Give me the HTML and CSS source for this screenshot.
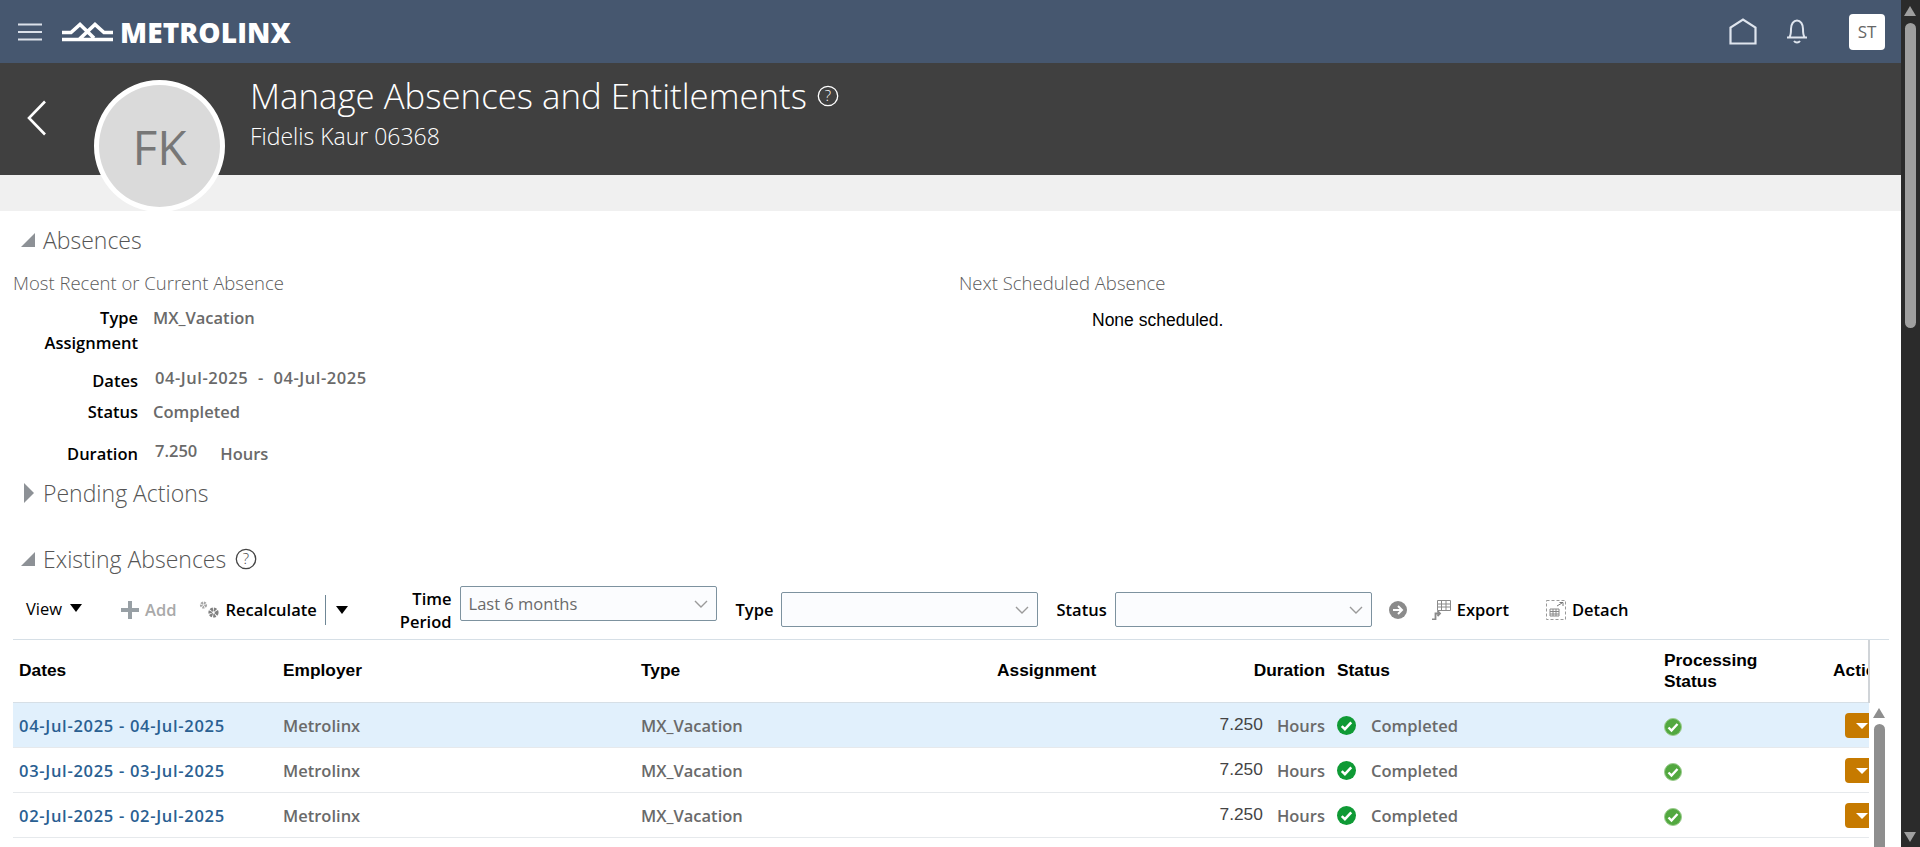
FILE: index.html
```html
<!DOCTYPE html>
<html lang="en">
<head>
  <meta charset="UTF-8" />
  <title>Manage Absences and Entitlements</title>
  <link rel="stylesheet" href="styles.css">
</head>
<body>
  <div class="page">
    <!-- Top bar -->
    <header class="topbar">
      <svg class="burger" width="24" height="18" viewBox="0 0 24 18"><path d="M0 1.500h24M0 9h24M0 16.500h24" stroke="#dbe1ea" stroke-width="2" fill="none"/></svg>
      <svg class="logo-mark" width="51" height="20" viewBox="0 0 51 20" fill="none" stroke="#fff" stroke-width="3.600"><path d="M0 10.500h9l9-8 14 13.500M0 17.500h51M17 17.500 33 2.500l9 8h9"/></svg>
      <span class="logo-text">METROLINX</span>
      <div class="topbar-right">
        <svg class="home" width="28" height="27" viewBox="0 0 28 27" fill="none" stroke="#dfe5ee" stroke-width="2.200"><path d="M1.500 25.500V9.500L14 1.500l12.500 8v16z"/></svg>
        <svg class="bell" width="22" height="25" viewBox="0 0 22 25" fill="none" stroke="#dfe5ee" stroke-width="2"><path d="M1 18.500h20M3.500 18c1.500-2 1.500-4 1.500-8 0-5 2.500-8.500 6-8.500s6 3.500 6 8.500c0 4 0 6 1.500 8M8 22c1.500 2 4.500 2 6 0"/></svg>
        <div class="user-chip">ST</div>
      </div>
    </header>

    <!-- Dark title band -->
    <section class="title-band">
      <svg class="back" width="20" height="36" viewBox="0 0 20 36" fill="none" stroke="#fff" stroke-width="2.600"><path d="M18 1.500 2 18l16 16.500"/></svg>
      <div class="avatar">FK</div>
      <div class="title-text">
        <h1>Manage Absences and Entitlements
          <svg class="help" width="22" height="22" viewBox="0 0 22 22"><circle cx="11" cy="11" r="9.700" fill="none" stroke="#fff" stroke-width="1.300"/><text x="11" y="16" text-anchor="middle" class="help-q" fill="#fff">?</text></svg>
        </h1>
        <p class="person">Fidelis Kaur 06368</p>
      </div>
    </section>
    <div class="grey-band"></div>

    <main class="content">
      <h2 class="section-head"><span class="tri tri-open"></span>Absences</h2>
      <div class="summary">
        <div class="summary-col recent">
          <h3>Most Recent or Current Absence</h3>
          <div class="field f-type"><label>Type</label><span>MX_Vacation</span></div>
          <div class="field f-assign"><label>Assignment</label></div>
          <div class="field f-dates"><label>Dates</label><span class="val-shift spaced">04-Jul-2025&nbsp; -&nbsp; 04-Jul-2025</span></div>
          <div class="field f-status"><label>Status</label><span>Completed</span></div>
          <div class="field f-dur"><label>Duration</label><span class="val-shift">7.250</span><span class="hours">Hours</span></div>
        </div>
        <div class="summary-col next">
          <h3>Next Scheduled Absence</h3>
          <p class="none">None scheduled.</p>
        </div>
      </div>

      <h2 class="section-head pending"><span class="tri tri-closed"></span>Pending Actions</h2>

      <h2 class="section-head existing"><span class="tri tri-open"></span>Existing Absences
        <svg class="help" width="22" height="22" viewBox="0 0 22 22"><circle cx="11" cy="11" r="9.700" fill="none" stroke="#444" stroke-width="1.300"/><text x="11" y="16" text-anchor="middle" class="help-q" fill="#444">?</text></svg>
      </h2>

      <!-- Toolbar -->
      <div class="toolbar">
        <span class="tb-item view">View <span class="caret"></span></span>
        <span class="tb-item add"><svg width="18" height="18" viewBox="0 0 18 18"><path d="M7 0h4v7h7v4h-7v7H7v-7H0V7h7z" fill="#98a0a5"/></svg>Add</span>
        <span class="tb-item recalc">
          <svg width="21" height="18" viewBox="0 0 21 18"><circle cx="4.500" cy="4" r="2.200" fill="none" stroke="#a5a5a5" stroke-width="2.800" stroke-dasharray="1.700 .7"/><circle cx="14.500" cy="11.500" r="3.200" fill="none" stroke="#808080" stroke-width="3.800" stroke-dasharray="2.200 .8"/></svg>Recalculate</span>
        <span class="tb-sep"></span>
        <span class="caret caret-lone"></span>
        <label class="filter-label time">Time<br>Period</label>
        <div class="select s-time">Last 6 months<svg class="chev" width="14" height="8" viewBox="0 0 14 8"><path d="M1 1l6 6 6-6" fill="none" stroke="#9a9a9a" stroke-width="1.400"/></svg></div>
        <label class="filter-label">Type</label>
        <div class="select s-type"><svg class="chev" width="14" height="8" viewBox="0 0 14 8"><path d="M1 1l6 6 6-6" fill="none" stroke="#9a9a9a" stroke-width="1.400"/></svg></div>
        <label class="filter-label l-status">Status</label>
        <div class="select s-status"><svg class="chev" width="14" height="8" viewBox="0 0 14 8"><path d="M1 1l6 6 6-6" fill="none" stroke="#9a9a9a" stroke-width="1.400"/></svg></div>
        <svg class="go" width="18" height="18" viewBox="0 0 18 18"><circle cx="9" cy="9" r="9" fill="#8b8b8b"/><path d="M4 9h8M9 5l4 4-4 4" fill="none" stroke="#fff" stroke-width="2"/></svg>
        <span class="tb-item export"><svg width="20" height="20" viewBox="0 0 20 20" fill="none" stroke="#8a8a8a"><path d="M6.500 .5h13v10h-13zM6.500 4h13M10.500 .5v10M15 .5v10M6.500 7h13"/><path d="M1 19.500h3.500v-6h4M6.500 11l2.500 2.500L6.500 16" stroke-width="1.800"/></svg>Export</span>
        <span class="tb-item detach"><svg width="20" height="20" viewBox="0 0 20 20" fill="none" stroke="#999"><path d="M.5.500h19v19H.5z" stroke-dasharray="3 2"/><path d="M4 9h9v7H4zM4 11.500h9M4 14h9M7 9v7M10 9v7" stroke="#888"/><path d="M11 6l5-3M13.500 2.500H17V6" stroke="#777"/></svg>Detach</span>
      </div>

      <!-- Absences table -->
      <div class="table-wrap">
        <table class="abs-table">
          <colgroup>
            <col class="c-dates"><col class="c-emp"><col class="c-type"><col class="c-assign"><col class="c-dur"><col class="c-status"><col class="c-proc"><col class="c-act">
          </colgroup>
          <thead>
            <tr>
              <th>Dates</th><th>Employer</th><th>Type</th><th>Assignment</th><th class="num">Duration</th><th>Status</th><th>Processing<br>Status</th><th class="act-head"><span>Action</span></th>
            </tr>
          </thead>
          <tbody>
            <tr class="selected">
              <td><a href="#">04-Jul-2025 - 04-Jul-2025</a></td><td>Metrolinx</td><td>MX_Vacation</td><td></td>
              <td class="num"><span class="qty">7.250</span><span class="unit">Hours</span></td>
              <td><svg class="ok" width="19" height="19" viewBox="0 0 18 18"><circle cx="9" cy="9" r="9" fill="#0f9a35"/><path d="M4.500 9.500l3 3 6-6.500" fill="none" stroke="#fff" stroke-width="2.400"/></svg>Completed</td>
              <td><svg class="ok2" width="18" height="20" viewBox="0 0 18 20"><circle cx="9" cy="10" r="8.500" fill="#52a83f" stroke="#9ccc8f"/><path d="M4.500 10.500l3 3 6-6.500" fill="none" stroke="#fff" stroke-width="2.400"/></svg></td>
              <td class="act"><span class="act-btn"></span></td>
            </tr>
            <tr>
              <td><a href="#">03-Jul-2025 - 03-Jul-2025</a></td><td>Metrolinx</td><td>MX_Vacation</td><td></td>
              <td class="num"><span class="qty">7.250</span><span class="unit">Hours</span></td>
              <td><svg class="ok" width="19" height="19" viewBox="0 0 18 18"><circle cx="9" cy="9" r="9" fill="#0f9a35"/><path d="M4.500 9.500l3 3 6-6.500" fill="none" stroke="#fff" stroke-width="2.400"/></svg>Completed</td>
              <td><svg class="ok2" width="18" height="20" viewBox="0 0 18 20"><circle cx="9" cy="10" r="8.500" fill="#52a83f" stroke="#9ccc8f"/><path d="M4.500 10.500l3 3 6-6.500" fill="none" stroke="#fff" stroke-width="2.400"/></svg></td>
              <td class="act"><span class="act-btn"></span></td>
            </tr>
            <tr>
              <td><a href="#">02-Jul-2025 - 02-Jul-2025</a></td><td>Metrolinx</td><td>MX_Vacation</td><td></td>
              <td class="num"><span class="qty">7.250</span><span class="unit">Hours</span></td>
              <td><svg class="ok" width="19" height="19" viewBox="0 0 18 18"><circle cx="9" cy="9" r="9" fill="#0f9a35"/><path d="M4.500 9.500l3 3 6-6.500" fill="none" stroke="#fff" stroke-width="2.400"/></svg>Completed</td>
              <td><svg class="ok2" width="18" height="20" viewBox="0 0 18 20"><circle cx="9" cy="10" r="8.500" fill="#52a83f" stroke="#9ccc8f"/><path d="M4.500 10.500l3 3 6-6.500" fill="none" stroke="#fff" stroke-width="2.400"/></svg></td>
              <td class="act"><span class="act-btn"></span></td>
            </tr>
          </tbody>
        </table>
        <div class="inner-scroll">
          <span class="arrow-up"></span>
          <span class="inner-thumb"></span>
        </div>
      </div>
    </main>
  </div>

  <!-- Browser scrollbar -->
  <div class="page-scroll">
    <span class="ps-up"></span>
    <span class="ps-thumb"></span>
    <span class="ps-down"></span>
  </div>
</body>
</html>
```

FILE: styles.css
```css
/* ===== Page ===== */
html, body {
  height: 100%;
}
body {
  margin: 0;
  height: 847px;
  overflow: hidden;
  display: flex;
  font-family: "Open Sans", "Noto Sans", sans-serif;
  font-size: 16.5px;
  color: #000;
  background: #fff;
}
.page {
  flex: 1;
  min-width: 0;
  height: 847px;
  overflow: hidden;
}

/* ===== Top bar ===== */
.topbar {
  height: 63px;
  background: #46576f;
  display: flex;
  align-items: center;
  padding: 0 0 0 18px;
}
.burger {
  margin-right: 20px;
}
.logo-text {
  margin-left: 7px;
  color: #fff;
  font-weight: 800;
  font-size: 28px;
  letter-spacing: 0.1px;
}
.topbar-right {
  margin-left: auto;
  display: flex;
  align-items: center;
  padding-right: 16px;
}
.home {
  margin-right: 29px;
}
.bell {
  margin-right: 41px;
}
.user-chip {
  width: 36px;
  height: 36px;
  background: #fff;
  border-radius: 4px;
  color: #666;
  font-size: 17px;
  display: flex;
  align-items: center;
  justify-content: center;
}

/* ===== Title band ===== */
.title-band {
  height: 112px;
  background: #404040;
  position: relative;
  display: flex;
  padding-left: 27px;
  color: #fff;
}
.back {
  margin-top: 37px;
}
.avatar {
  position: absolute;
  left: 94px;
  top: 17px;
  width: 121px;
  height: 122px;
  border: 5px solid #fff;
  border-radius: 50%;
  background: #dadada;
  color: #777;
  font-size: 48px;
  font-weight: 400;
  display: flex;
  align-items: center;
  justify-content: center;
}
.title-text {
  margin-left: 203px;
}
.title-text h1 {
  margin: 12px 0 0;
  font-size: 34.8px;
  line-height: 42px;
  font-weight: 300;
  display: flex;
  align-items: center;
  gap: 10px;
}
.help-q {
  font-size: 15px;
  font-family: "Open Sans", sans-serif;
}
.person {
  margin: 5px 0 0;
  font-size: 23px;
  line-height: 28px;
  font-weight: 300;
}
.grey-band {
  height: 36px;
  background: #f0f0f0;
}

/* ===== Sections ===== */
.content {
  padding: 0 12px 0 13px;
}
.section-head {
  margin: 0;
  font-size: 23px;
  line-height: 32px;
  font-weight: 300;
  color: #555;
  display: flex;
  align-items: center;
}
.section-head:first-child {
  padding-top: 13px;
}
.tri {
  width: 30px;
  flex: none;
  height: 14px;
  position: relative;
}
.tri::after {
  content: "";
  position: absolute;
}
.tri-open::after {
  left: 8px;
  top: 0;
  border-left: 14px solid transparent;
  border-bottom: 14px solid #8d9196;
}
.tri-closed::after {
  left: 11px;
  top: -3px;
  border-left: 10px solid #8d9196;
  border-top: 10px solid transparent;
  border-bottom: 10px solid transparent;
}
.section-head .help {
  margin-left: 9px;
}
.pending {
  margin-top: 12px;
}
.existing {
  margin-top: 34px;
}

/* ===== Summary ===== */
.summary {
  display: flex;
  margin-top: 15px;
}
.summary-col h3 {
  margin: 0;
  font-size: 18.5px;
  line-height: 24px;
  font-weight: 300;
  color: #5b5b5b;
}
.recent {
  width: 946px;
  flex: none;
}
.next p.none {
  margin: 15px 0 0 133px;
  font-family: "Liberation Sans", sans-serif;
  font-size: 17.5px;
  line-height: 20px;
}
.field {
  display: flex;
  color: #6a6a6a;
  font-weight: 600;
  line-height: 22px;
}
.field label {
  width: 125px;
  flex: none;
  text-align: right;
  color: #000;
  margin-right: 15px;
}
.f-type { margin-top: 12px; }
.f-assign { margin-top: 3px; }
.f-dates { margin-top: 16px; }
.f-status { margin-top: 9px; }
.f-dur { margin-top: 20px; }
.val-shift {
  margin-left: 2px;
  margin-top: -3px;
}
.spaced {
  letter-spacing: 0.55px;
}
.hours {
  margin-left: 23px;
}

/* ===== Toolbar ===== */
.toolbar {
  height: 58px;
  margin-top: 7px;
  padding-bottom: 2px;
  box-sizing: border-box;
  border-bottom: 1px solid #d6dfe6;
  display: flex;
  align-items: center;
  font-weight: 600;
}
.tb-item {
  display: flex;
  align-items: center;
  gap: 6px;
}
.view {
  margin-left: 13px;
  font-weight: 400;
  gap: 8px;
  margin-top: -3px;
}
.add {
  margin-left: 39px;
  color: #a9a9a9;
}
.recalc {
  margin-left: 22px;
}
.caret {
  display: inline-block;
  border-left: 6px solid transparent;
  border-right: 6px solid transparent;
  border-top: 8px solid #000;
}
.tb-sep {
  width: 1px;
  height: 30px;
  background: #6f8796;
  margin: 0 10px 0 8px;
}
.filter-label {
  text-align: right;
  line-height: 23px;
}
.time {
  margin-left: 52px;
  margin-right: 8px;
  margin-top: 1px;
}
.select {
  height: 35px;
  border: 1px solid #7d929f;
  border-radius: 2px;
  background: #fbfcfe;
  display: flex;
  align-items: center;
  justify-content: space-between;
  padding: 0 8px;
  color: #6a6a6a;
  font-weight: 400;
  box-sizing: border-box;
}
.s-time {
  width: 257px;
  margin-top: -12px;
  margin-right: 19px;
}
.s-type {
  width: 257px;
  margin-left: 8px;
  justify-content: flex-end;
}
.l-status {
  margin-left: 18px;
}
.s-status {
  width: 257px;
  margin-left: 8px;
  justify-content: flex-end;
}
.go {
  margin-left: 17px;
}
.export {
  margin-left: 24px;
}
.detach {
  margin-left: 37px;
}

/* ===== Table ===== */
.table-wrap {
  display: flex;
}
.abs-table {
  width: 1857px;
  table-layout: fixed;
  border-collapse: collapse;
  flex: none;
}
.c-dates { width: 264px; }
.c-emp { width: 358px; }
.c-type { width: 356px; }
.c-assign { width: 200px; }
.c-dur { width: 140px; }
.c-status { width: 327px; }
.c-proc { width: 169px; }
.abs-table th {
  height: 61px;
  text-align: left;
  vertical-align: middle;
  padding: 0 6px 1px;
  font-family: "Liberation Sans", sans-serif;
  font-size: 17.33px;
  line-height: 21px;
  font-weight: 700;
  border-bottom: 1px solid #d6dfe6;
}
.abs-table th.num {
  text-align: right;
}
.act-head {
  overflow: hidden;
  white-space: nowrap;
  border-right: 2px solid #d0d4d8;
}
.abs-table td {
  height: 44px;
  padding: 0 6px;
  border-bottom: 1px solid #e6e9ec;
  color: #6a6a6a;
  font-weight: 600;
  white-space: nowrap;
}
.abs-table a {
  color: #2a6092;
  text-decoration: none;
  letter-spacing: 0.7px;
}
.selected td {
  background: #e1f0fc;
}
.num {
  text-align: right;
}
.qty {
  font-family: "Liberation Sans", sans-serif;
  font-weight: 400;
  font-size: 17.33px;
  color: #444;
  vertical-align: 2px;
}
.unit {
  margin-left: 14px;
}
.ok {
  vertical-align: -3px;
  margin-right: 15px;
}
.ok2 {
  vertical-align: middle;
}
.act {
  padding: 0 !important;
  overflow: hidden;
}
.act-btn {
  display: block;
  width: 24px;
  height: 25px;
  margin-left: auto;
  background: #c67a00;
  border-radius: 4px 0 0 4px;
  position: relative;
}
.act-btn::after {
  content: "";
  position: absolute;
  left: 11px;
  top: 10px;
  border-left: 6px solid transparent;
  border-right: 6px solid transparent;
  border-top: 6px solid #fff;
}

/* inner table scrollbar */
.inner-scroll {
  flex: 1;
  position: relative;
  margin-top: 62px;
}
.arrow-up {
  position: absolute;
  left: 3px;
  top: 6px;
  border-left: 6px solid transparent;
  border-right: 6px solid transparent;
  border-bottom: 10px solid #8e8e8e;
}
.inner-thumb {
  position: absolute;
  left: 4px;
  top: 22px;
  width: 11px;
  height: 200px;
  background: #8e8e8e;
  border-radius: 6px;
}

/* ===== Page scrollbar ===== */
.page-scroll {
  width: 19px;
  flex: none;
  height: 847px;
  background: #2b2b2b;
  position: relative;
}
.ps-up {
  position: absolute;
  left: 3px;
  top: 6px;
  border-left: 6px solid transparent;
  border-right: 6px solid transparent;
  border-bottom: 10px solid #9f9f9f;
}
.ps-thumb {
  position: absolute;
  left: 4px;
  top: 23px;
  width: 11px;
  height: 305px;
  background: #9f9f9f;
  border-radius: 6px;
}
.ps-down {
  position: absolute;
  left: 3px;
  bottom: 5px;
  border-left: 6px solid transparent;
  border-right: 6px solid transparent;
  border-top: 10px solid #9f9f9f;
}
```
